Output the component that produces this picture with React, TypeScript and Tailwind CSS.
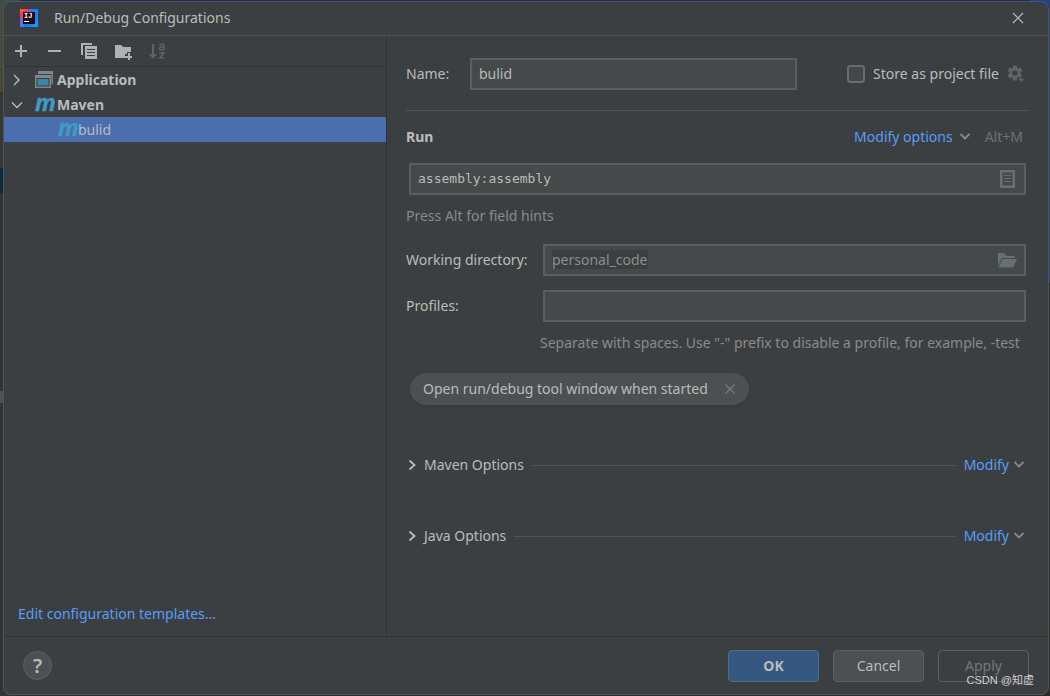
import { useState } from 'react';
import type { ReactNode } from 'react';

const fieldClass = 'h-8 w-full min-w-0 border-2 border-[#5b5e60] bg-[#45494a] px-[7px] pb-px text-[#bbbbbb] outline-none focus:border-[#466d94]';

function IdeaLogo() {
  return (
    <svg width="18" height="18" viewBox="0 0 18 18" aria-hidden="true">
      <defs>
        <linearGradient id="idea" x1="0" y1="0" x2="1" y2="1">
          <stop offset="0" stopColor="#f97a12" />
          <stop offset="0.2" stopColor="#fe315d" />
          <stop offset="0.4" stopColor="#b04fb0" />
          <stop offset="0.6" stopColor="#087cfa" />
          <stop offset="1" stopColor="#12a5ff" />
        </linearGradient>
      </defs>
      <rect width="18" height="18" fill="url(#idea)" />
      <path d="M9 0h9v9L12 4z" fill="#1585f5" />
      <path d="M0 10l4 2v6H0z" fill="#4a7af0" />
      <rect x="3" y="3" width="12" height="12" fill="#1b0a18" />
      <text x="4" y="9" fill="#fff" fontSize="7" fontWeight="700" fontFamily="Liberation Mono, monospace">IJ</text>
      <rect x="4" y="12" width="5" height="1" fill="#fff" />
    </svg>
  );
}

function Chevron({ dir = 'down', thin, className = '' }: { dir?: 'down' | 'right'; thin?: boolean; className?: string }) {
  const down = dir === 'down';
  return (
    <svg width="12" height="12" viewBox="0 0 12 12" fill="none" stroke="currentColor" className={className} aria-hidden="true">
      {thin
        ? <path d={down ? 'M1 3.5l5 5 5-5' : 'M3 1l5 5-5 5'} strokeWidth="1.4" />
        : <path d={down ? 'M1.5 3l4.5 4.5L10.5 3' : 'M3.5 1.500L8.5 6l-5 4.5'} strokeWidth="1.8" />}
    </svg>
  );
}

function ApplicationIcon() {
  return (
    <svg width="18" height="17" viewBox="0 0 18 17" aria-hidden="true">
      <path d="M3 0h15v13h-1.500V3H3z" fill="#7b868d" />
      <path d="M0 4h16v13H0zM1.500 7v8.500h13V7z" fill="#7b868d" fillRule="evenodd" />
      <rect x="2.500" y="8" width="11" height="6.500" fill="#3a87a3" />
    </svg>
  );
}

function MavenIcon() {
  return (
    <svg width="20" height="18" viewBox="0 0 20 18" className="overflow-visible" aria-hidden="true">
      <text x="0" y="15" fill="#3f9bc4" stroke="#3f9bc4" strokeWidth="0.4" fontSize="23" fontWeight="700" fontStyle="italic" fontFamily="Open Sans, sans-serif">m</text>
    </svg>
  );
}

function GearIcon() {
  return (
    <svg width="18" height="18" viewBox="0 0 18 18" aria-hidden="true">
      <g fill="#616365">
        <rect x="6" y="0.500" width="4" height="15" rx="0.500" />
        <rect x="6" y="0.500" width="4" height="15" rx="0.500" transform="rotate(60 8 8)" />
        <rect x="6" y="0.500" width="4" height="15" rx="0.500" transform="rotate(-60 8 8)" />
        <circle cx="8" cy="8" r="5.700" />
      </g>
      <circle cx="8" cy="8" r="2.600" fill="#3c3f41" />
      <path d="M10 13h8.500l-4 4.500z" fill="#616365" stroke="#3c3f41" />
    </svg>
  );
}

function ToolButton({ label, children, disabled }: { label: string; children: ReactNode; disabled?: boolean }) {
  return (
    <button type="button" aria-label={label} disabled={disabled} className="flex size-[18px] items-center justify-center text-[#afb1b3] disabled:text-[#606264]">
      <svg width="18" height="18" viewBox="0 0 18 18" fill="currentColor">{children}</svg>
    </button>
  );
}

function Toolbar() {
  return (
    <div className="flex h-[31px] items-center gap-4 border-b border-[#323232] px-2">
      <ToolButton label="Add">
        <path d="M12 3h2v5h5v2h-5v5h-2v-5H7V8h5z" transform="translate(-4 0)" />
      </ToolButton>
      <ToolButton label="Remove">
        <path d="M2 8h13v2H2z" />
      </ToolButton>
      <ToolButton label="Copy">
        <path d="M1 1h11v2H3v10H1z" />
        <path d="M5 4h12v13H5zM7 7v1h8V7zM7 10v1h8v-1zM7 13v1h8v-1z" fillRule="evenodd" />
      </ToolButton>
      <ToolButton label="New folder">
        <path d="M1 3h6l2 2h8v5h-4v2h-2v4H1z" />
        <path d="M14 11h2v3h3v2h-3v3h-2v-3h-3v-2h3z" />
      </ToolButton>
      <ToolButton label="Sort" disabled>
        <path d="M4 2h2v10h3l-4 5-4-5h3z" />
        {/* a over z */}
        <path d="M11.500 3Q16 1 16 4v4M16 5h-3Q11 5 11.500 7T16 7" fill="none" stroke="currentColor" strokeWidth="1.500" />
        <path d="M11 11h5l-4.500 5H16.500" fill="none" stroke="currentColor" strokeWidth="1.500" />
      </ToolButton>
    </div>
  );
}

function Tree() {
  const [appOpen, setAppOpen] = useState(false);
  const [mavenOpen, setMavenOpen] = useState(true);

  return (
    <ul className="flex-1">
      <li>
        <button type="button" aria-expanded={appOpen} onClick={() => setAppOpen(!appOpen)} className="flex h-[25px] w-full items-center pl-[7px] font-bold">
          <Chevron thin dir={appOpen ? 'down' : 'right'} />
          <span className="ml-3 mr-1"><ApplicationIcon /></span>
          Application
        </button>
      </li>
      <li>
        <button type="button" aria-expanded={mavenOpen} onClick={() => setMavenOpen(!mavenOpen)} className="flex h-[25px] w-full items-center pl-[7px] font-bold">
          <Chevron thin dir={mavenOpen ? 'down' : 'right'} />
          <span className="ml-3 mr-0.5"><MavenIcon /></span>
          Maven
        </button>
        {mavenOpen && (
          <ul>
            <li>
              <button type="button" className="flex h-[25px] w-full items-center bg-[#4b6eaf] pl-[54px]">
                <MavenIcon />
                bulid
              </button>
            </li>
          </ul>
        )}
      </li>
    </ul>
  );
}

function OptionGroup({ title }: { title: string }) {
  return (
    <div className="flex h-6 items-center">
      <button type="button" className="flex items-center gap-1.5">
        <Chevron dir="right" />
        {title}
      </button>
      <div className="mx-2 h-px flex-1 bg-[#515355]" />
      <button type="button" className="flex items-center gap-1 pr-1 text-[#589df6]">
        Modify
        <Chevron className="text-[#7f8b91]" />
      </button>
    </div>
  );
}

function ConfigForm() {
  const [name, setName] = useState('bulid');
  const [command, setCommand] = useState('assembly:assembly');
  const [dir, setDir] = useState('personal_code');
  const [profiles, setProfiles] = useState('');
  const [showChip, setShowChip] = useState(true);

  return (
    <main className="flex min-w-0 flex-1 flex-col pt-[22px] pr-[19px] pl-[19px]">
      <div className="flex items-center pb-5">
        <label htmlFor="name" className="w-16">Name:</label>
        <div className="max-w-[327px] flex-1">
          <input id="name" value={name} onChange={e => setName(e.target.value)} className={fieldClass} />
        </div>
        <div className="ml-auto flex items-center gap-2">
          <input id="store" type="checkbox" className="size-[18px] appearance-none rounded-[3px] border-2 border-[#6b6b6b] bg-[#43494a] checked:bg-[#4b6eaf]" />
          <label htmlFor="store">Store as project file</label>
          <button type="button" aria-label="Storage settings" className="mr-1"><GearIcon /></button>
        </div>
      </div>

      <div className="flex items-center border-t border-[#515355] pt-4 pb-4">
        <h2 className="font-bold">Run</h2>
        <button type="button" className="ml-auto flex items-center gap-1.5 text-[#589df6]">
          Modify options
          <Chevron className="text-[#7f8b91]" />
        </button>
        <span className="pr-1.5 pl-3.5 text-[#6f7173]">Alt+M</span>
      </div>

      <div className="relative mr-[3px] ml-[3px]">
        <input aria-label="Command line" value={command} onChange={e => setCommand(e.target.value)} className={`${fieldClass} font-['DejaVu_Sans_Mono',monospace] text-[13px]`} />
        <button type="button" aria-label="Browse goals" className="absolute top-[7px] right-[11px]">
          <svg width="15" height="18" viewBox="0 0 15 18" fill="#667074">
            <path d="M0 0h15v18H0zM2.500 2.500v13h10v-13z" fillRule="evenodd" />
            <path d="M4 5h7v1H4zM4 8h7v1H4zM4 11h7v1H4z" />
          </svg>
        </button>
      </div>
      <p className="mt-[11px] text-[#8a8a8a]">Press Alt for field hints</p>

      <div className="mt-[18px] mr-[3px] flex items-center">
        <label htmlFor="dir" className="w-[137px] shrink-0">Working directory:</label>
        <div className="relative flex-1">
          <input id="dir" value={dir} onChange={e => setDir(e.target.value)} className={`${fieldClass} text-transparent caret-[#bbbbbb]`} />
          <span className="pointer-events-none absolute top-1.5 left-[9px] bg-[#3c3f41] leading-[19px] text-[#8c8c8c]" aria-hidden="true">{dir}</span>
          <button type="button" aria-label="Choose folder" className="absolute top-[9px] right-[9px]">
            <svg width="19" height="15" viewBox="0 0 19 15" fill="#667074">
              <path d="M0 0h6l2 3h8.500v2H4L0 13z" />
              <path d="M4.500 6H19l-4 8.500H0.500z" />
            </svg>
          </button>
        </div>
      </div>

      <div className="mt-3.5 mr-[3px] flex items-center">
        <label htmlFor="profiles" className="w-[137px] shrink-0">Profiles:</label>
        <div className="flex-1">
          <input id="profiles" value={profiles} onChange={e => setProfiles(e.target.value)} className={fieldClass} />
        </div>
      </div>
      <p className="mt-[11px] ml-[134px] whitespace-nowrap text-[#8a8a8a]">Separate with spaces. Use "-" prefix to disable a profile, for example, -test</p>

      <div className="mt-5 ml-1 flex h-8">
        {showChip && (
          <div className="flex items-center gap-4 rounded-full bg-[#4c5052] px-[13px] shadow-sm">
            Open run/debug tool window when started
            <button type="button" aria-label="Remove option" onClick={() => setShowChip(false)}>
              <svg width="12" height="12" viewBox="0 0 12 12" stroke="#737b80" strokeWidth="1.300"><path d="M1.500 1.500l9 9M10.500 1.500l-9 9" /></svg>
            </button>
          </div>
        )}
      </div>

      <div className="mt-12 flex flex-col gap-[47px]">
        <OptionGroup title="Maven Options" />
        <OptionGroup title="Java Options" />
      </div>
    </main>
  );
}

export default function App() {
  return (
    <div className="relative flex min-h-screen flex-col bg-[#2b2b2b] pt-px pr-px pb-px pl-[3px] font-['Noto_Sans','Noto_Sans_CJK_SC',sans-serif] text-[14px] leading-5 text-[#bbbbbb]">
      {/* slivers of the editor behind the dialog */}
      <div className="absolute inset-0 flex justify-between" aria-hidden="true">
        <div className="flex w-5 flex-col">
          <div className="h-[68px] bg-[#414f43]" />
          <div className="h-6 bg-[#4b4538]" />
          <div className="h-[76px] bg-[#34373a]" />
          <div className="h-[25px] bg-[#0d293e]" />
          <div className="h-[198px] bg-[#313335]" />
          <div className="h-3 bg-[#4e5254]" />
          <div className="flex-1 bg-[#313335]" />
        </div>
        <div className="h-[283px] w-5 bg-[#214283]" />
      </div>

      <div className="relative flex flex-1 flex-col overflow-hidden rounded-lg border border-[#515355] border-t-[#43557f] bg-[#3c3f41]">
        <header className="flex h-[34px] items-center border-b border-[#515355] pr-6 pb-px pl-4">
          <IdeaLogo />
          <h1 className="ml-4">Run/Debug Configurations</h1>
          <button type="button" aria-label="Close" className="ml-auto">
            <svg width="12" height="12" viewBox="0 0 12 12" stroke="#bbbbbb" strokeWidth="1.200"><path d="M1 1l10 10M11 1L1 11" /></svg>
          </button>
        </header>

        <div className="flex flex-1">
          <aside className="flex w-[383px] shrink-0 flex-col border-r border-[#323232]">
            <Toolbar />
            <Tree />
            <a href="#templates" className="mb-3 px-3.5 text-[#589df6]">Edit configuration templates...</a>
          </aside>
          <ConfigForm />
        </div>

        <footer className="flex h-[58px] items-center gap-3.5 border-t border-[#323232] px-[19px]">
          <button type="button" aria-label="Help" className="mr-auto flex size-[29px] items-center justify-center rounded-full border border-[#5e6060] bg-[#4c5052] text-[20px] font-semibold">?</button>
          <button type="button" className="h-8 w-[91px] rounded border border-[#4c708c] bg-[#365880] font-bold">OK</button>
          <button type="button" className="h-8 w-[91px] rounded border border-[#5e6060] bg-[#4c5052]">Cancel</button>
          <button type="button" disabled className="h-8 w-[91px] rounded border border-[#5e6060] text-[#777777]">Apply</button>
        </footer>
      </div>

      <span className="absolute right-4 bottom-1.5 font-['Liberation_Sans','Noto_Sans_CJK_SC',sans-serif] text-[11px] text-[#d0d0d0]">CSDN @知虚</span>
    </div>
  );
}
